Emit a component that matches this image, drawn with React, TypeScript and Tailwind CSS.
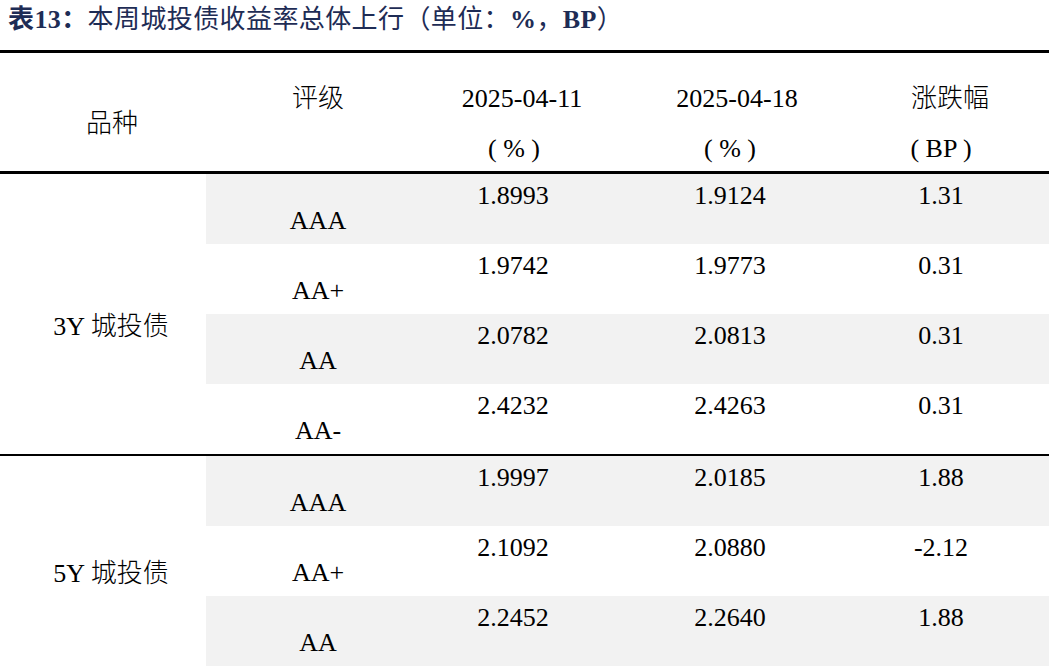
import React from "react";

type Row = { rating: string; a: string; b: string; c: string };

const sections: { label: string; rows: Row[] }[] = [
  {
    label: "3Y 城投债",
    rows: [
      { rating: "AAA", a: "1.8993", b: "1.9124", c: "1.31" },
      { rating: "AA+", a: "1.9742", b: "1.9773", c: "0.31" },
      { rating: "AA", a: "2.0782", b: "2.0813", c: "0.31" },
      { rating: "AA-", a: "2.4232", b: "2.4263", c: "0.31" },
    ],
  },
  {
    label: "5Y 城投债",
    rows: [
      { rating: "AAA", a: "1.9997", b: "2.0185", c: "1.88" },
      { rating: "AA+", a: "2.1092", b: "2.0880", c: "-2.12" },
      { rating: "AA", a: "2.2452", b: "2.2640", c: "1.88" },
    ],
  },
];

export default function App() {
  return (
    <div className="w-[1049px] h-[666px] overflow-hidden bg-white text-black font-light font-['Liberation_Serif','Noto_Sans_CJK_SC',serif]">
      <div className="h-[50px] pl-[8px] text-[26px] leading-[40px] tracking-[0.4px] text-[#1e2c55] whitespace-nowrap">
        <span className="font-bold">表13：</span>
        <span className="font-normal">本周城投债收益率总体上行（单位：</span>
        <span className="font-bold">%</span>
        <span className="font-normal">，</span>
        <span className="font-bold">BP</span>
        <span className="font-normal">）</span>
      </div>
      <div className="border-t-[3px] border-b-[3px] border-black h-[124px] grid grid-cols-[206px_224px_190px_220px_209px] text-[26px] leading-[30px]">
        <div className="pt-[56px] pl-[18px] text-center">品种</div>
        <div className="pt-[31px] text-center">评级</div>
        <div className="pt-[31px] flex flex-col">
          <div className="pr-[6px] text-center">2025-04-11</div>
          <div className="mt-[20px] pr-[22px] text-center">( % )</div>
        </div>
        <div className="pt-[31px] flex flex-col">
          <div className="pl-[14px] text-center">2025-04-18</div>
          <div className="mt-[20px] text-center">( % )</div>
        </div>
        <div className="pt-[31px] flex flex-col">
          <div className="pl-[11px] text-center">涨跌幅</div>
          <div className="mt-[20px] pr-[7px] text-center">( BP )</div>
        </div>
      </div>
      {sections.map((s, si) => (
        <div
          key={s.label}
          className={`flex ${si === 0 ? "border-b-2 border-black" : ""}`}
        >
          <div className="w-[206px] shrink-0 flex items-center justify-center pt-[25px] pl-[16px] text-[26px] leading-[30px]">
            {s.label}
          </div>
          <div className="flex-1 flex flex-col">
            {s.rows.map((r, i) => (
              <div
                key={r.rating}
                className={`h-[70px] grid grid-cols-[224px_190px_220px_209px] text-[26px] leading-[26px] ${
                  i % 2 === 0 ? "bg-[#f2f2f2]" : "bg-white"
                }`}
              >
                <div className="pt-[34px] text-center">{r.rating}</div>
                <div className="pt-[9px] pr-[24px] text-center">{r.a}</div>
                <div className="pt-[9px] text-center">{r.b}</div>
                <div className="pt-[9px] pr-[7px] text-center">{r.c}</div>
              </div>
            ))}
          </div>
        </div>
      ))}
    </div>
  );
}
